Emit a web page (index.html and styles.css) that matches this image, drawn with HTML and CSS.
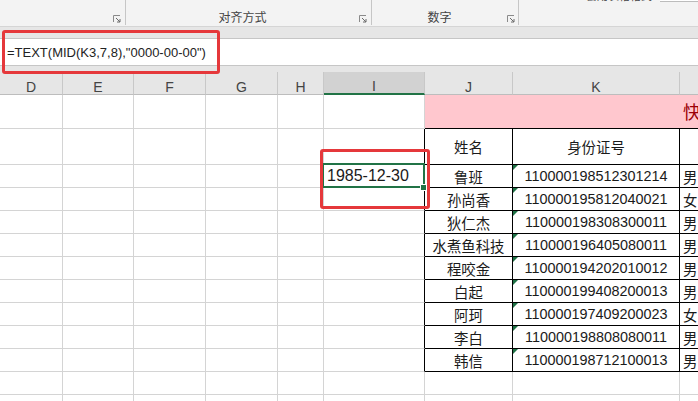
FILE: index.html
```html
<!DOCTYPE html>
<html lang="zh-CN">
<head>
  <meta charset="UTF-8">
  <title>身份证号提取出生日期</title>
  <link rel="stylesheet" href="styles.css">
</head>
<body>

  <div class="ribbon">
    <div class="group g1">
      <span class="glabel"></span>
      <svg class="launch" width="8" height="8" viewBox="0 0 8 8"><path d="M0.5 7V0.5H7" fill="none" stroke="#8a8a8a"/><path d="M3 3L7 7M7 4V7H4" fill="none" stroke="#6a6a6a"/></svg>
    </div>
    <div class="group g2">
      <span class="glabel">对齐方式</span>
      <svg class="launch" width="8" height="8" viewBox="0 0 8 8"><path d="M0.5 7V0.5H7" fill="none" stroke="#8a8a8a"/><path d="M3 3L7 7M7 4V7H4" fill="none" stroke="#6a6a6a"/></svg>
    </div>
    <div class="group g3">
      <span class="glabel">数字</span>
      <svg class="launch" width="8" height="8" viewBox="0 0 8 8"><path d="M0.5 7V0.5H7" fill="none" stroke="#8a8a8a"/><path d="M3 3L7 7M7 4V7H4" fill="none" stroke="#6a6a6a"/></svg>
    </div>
    <div class="group g4">
      <span class="cut">套用表格格式</span>
      <span class="cutbox"></span>
    </div>
  </div>

  <div class="band"></div>

  <div class="fbar">=TEXT(MID(K3,7,8),"0000-00-00")</div>

  <div class="gap"></div>

  <div class="sheet-wrap">
    <div class="sheet">
      <!-- column headers -->
      <div class="ch">D</div><div class="ch">E</div><div class="ch">F</div><div class="ch">G</div><div class="ch">H</div>
      <div class="ch on">I</div><div class="ch">J</div><div class="ch">K</div><div class="ch">L</div>

      <!-- row 1 -->
      <div class="c"></div><div class="c"></div><div class="c"></div><div class="c"></div><div class="c"></div><div class="c"></div>
      <div class="c title">快速提取出生日期</div>

      <!-- row 2 -->
      <div class="c"></div><div class="c"></div><div class="c"></div><div class="c"></div><div class="c"></div><div class="c edge"></div>
      <div class="c t mid">姓名</div><div class="c t mid">身份证号</div><div class="c t"></div>

      <!-- rows 3-11 -->
      <div class="c"></div><div class="c"></div><div class="c"></div><div class="c"></div><div class="c"></div>
      <div class="c edge cur">1985-12-30<span class="sel-box"></span><span class="handle"></span></div>
      <div class="c t mid">鲁班</div><div class="c t mid id"><span class="flag"></span>110000198512301214</div><div class="c t sex">男</div>

      <div class="c"></div><div class="c"></div><div class="c"></div><div class="c"></div><div class="c"></div><div class="c edge"></div>
      <div class="c t mid">孙尚香</div><div class="c t mid id"><span class="flag"></span>110000195812040021</div><div class="c t sex">女</div>

      <div class="c"></div><div class="c"></div><div class="c"></div><div class="c"></div><div class="c"></div><div class="c edge"></div>
      <div class="c t mid">狄仁杰</div><div class="c t mid id"><span class="flag"></span>110000198308300011</div><div class="c t sex">男</div>

      <div class="c"></div><div class="c"></div><div class="c"></div><div class="c"></div><div class="c"></div><div class="c edge"></div>
      <div class="c t mid">水煮鱼科技</div><div class="c t mid id"><span class="flag"></span>110000196405080011</div><div class="c t sex">男</div>

      <div class="c"></div><div class="c"></div><div class="c"></div><div class="c"></div><div class="c"></div><div class="c edge"></div>
      <div class="c t mid">程咬金</div><div class="c t mid id"><span class="flag"></span>110000194202010012</div><div class="c t sex">男</div>

      <div class="c"></div><div class="c"></div><div class="c"></div><div class="c"></div><div class="c"></div><div class="c edge"></div>
      <div class="c t mid">白起</div><div class="c t mid id"><span class="flag"></span>110000199408200013</div><div class="c t sex">男</div>

      <div class="c"></div><div class="c"></div><div class="c"></div><div class="c"></div><div class="c"></div><div class="c edge"></div>
      <div class="c t mid">阿珂</div><div class="c t mid id"><span class="flag"></span>110000197409200023</div><div class="c t sex">女</div>

      <div class="c"></div><div class="c"></div><div class="c"></div><div class="c"></div><div class="c"></div><div class="c edge"></div>
      <div class="c t mid">李白</div><div class="c t mid id"><span class="flag"></span>110000198808080011</div><div class="c t sex">男</div>

      <div class="c"></div><div class="c"></div><div class="c"></div><div class="c"></div><div class="c"></div><div class="c edge"></div>
      <div class="c t mid">韩信</div><div class="c t mid id"><span class="flag"></span>110000198712100013</div><div class="c t sex">男</div>

      <!-- empty rows -->
      <div class="c"></div><div class="c"></div><div class="c"></div><div class="c"></div><div class="c"></div><div class="c"></div><div class="c"></div><div class="c"></div><div class="c"></div>
      <div class="c"></div><div class="c"></div><div class="c"></div><div class="c"></div><div class="c"></div><div class="c"></div><div class="c"></div><div class="c"></div><div class="c"></div>
    </div>
  </div>

  <!-- annotation boxes -->
  <div class="mark mark-formula"></div>
  <div class="mark mark-cell"></div>

</body>
</html>
```

FILE: styles.css
```css
body {
  margin: 0;
  width: 698px;
  height: 401px;
  overflow: hidden;
  position: relative;
  background: #e6e6e6;
  font-family: "Liberation Sans", "Noto Sans CJK SC", sans-serif;
  color: #1a1a1a;
}

/* ribbon */
.ribbon {
  display: flex;
  align-items: flex-start;
  height: 26px;
  background: #f3f3f3;
  border-bottom: 1px solid #d5d5d5;
}

.group {
  display: flex;
  align-items: flex-end;
  box-sizing: border-box;
  height: 25px;
  padding-bottom: 2px;
  border-right: 1px solid #c6c6c6;
}

.g1 { width: 126px; }
.g2 { width: 246px; }
.g3 { width: 147px; }

.g4 {
  flex: 1;
  border-right: none;
  align-items: flex-start;
  padding-bottom: 0;
  overflow: hidden;
}

.glabel {
  flex: 1;
  text-align: center;
  font-family: "Noto Sans CJK SC", sans-serif;
  font-size: 12px;
  line-height: 12px;
  color: #444;
}

.launch {
  margin-right: 4px;
  margin-bottom: 0;
}

.g3 .launch {
  margin-right: 3px;
}

.cut {
  margin-top: -11px;
  margin-left: 67px;
  white-space: nowrap;
  font-family: "Noto Sans CJK SC", sans-serif;
  font-size: 11px;
  line-height: 12px;
  color: #444;
}

.cutbox {
  flex: none;
  width: 60px;
  height: 1px;
  margin-left: 8px;
  border-bottom: 1px solid #bcbcbc;
  background: #fff;
}

.band {
  height: 11px;
  background: #e6e6e6;
}

/* formula bar */
.fbar {
  display: flex;
  align-items: center;
  height: 26px;
  padding-left: 7px;
  background: #fff;
  border-top: 1px solid #c6c6c6;
  border-bottom: 1px solid #c6c6c6;
  font-size: 13px;
  color: #222;
}

.gap {
  height: 6px;
}

/* sheet */
.sheet-wrap {
  width: 698px;
  overflow: hidden;
}

.sheet {
  display: grid;
  grid-template-columns: 63px 71px 72px 72px 46px 101px 88px 167px 100px;
  grid-template-rows: 23px 34px 36px repeat(11, 23px);
  width: 780px;
  background: #fff;
}

.ch {
  display: flex;
  align-items: flex-end;
  justify-content: center;
  box-sizing: border-box;
  background: #e6e6e6;
  border-right: 1px solid #c8c8c8;
  border-bottom: 1px solid #bdbdbd;
  font-size: 14px;
  line-height: 14px;
  color: #444;
}

.ch.on {
  background: #d2d2d2;
  border-bottom: 2px solid #217346;
  line-height: 13px;
}

.c {
  display: flex;
  align-items: center;
  box-sizing: border-box;
  border-right: 1px solid #d4d4d4;
  border-bottom: 1px solid #d4d4d4;
  font-size: 14.4px;
  white-space: nowrap;
  position: relative;
}

.mid {
  justify-content: center;
}

.t {
  border-right-color: #000;
  border-bottom-color: #000;
}

.edge {
  border-right-color: #000;
}

.title {
  grid-column: span 3;
  align-items: flex-end;
  padding: 0 0 4px 258px;
  overflow: hidden;
  background: #ffc7ce;
  border-right: none;
  border-bottom-color: #000;
  color: #9c0006;
  font-size: 18px;
}

.sex {
  padding-left: 3px;
}

.flag {
  position: absolute;
  left: 0;
  top: 0;
  width: 0;
  height: 0;
  border-top: 5px solid #1e7145;
  border-right: 5px solid transparent;
}

/* active cell */
.cur {
  padding-left: 3px;
  font-size: 16px;
}

.sel-box {
  position: absolute;
  left: -2px;
  top: -2px;
  right: -1px;
  bottom: -1px;
  border: 2px solid #217346;
  z-index: 2;
}

.handle {
  position: absolute;
  right: -3px;
  bottom: -4px;
  width: 5px;
  height: 5px;
  background: #217346;
  border: 1px solid #fff;
  z-index: 3;
}

/* red annotation boxes */
.mark {
  position: absolute;
  box-sizing: border-box;
  border: 3px solid #e5383b;
  border-radius: 3px;
  z-index: 5;
}

.mark-formula {
  left: 2px;
  top: 30px;
  width: 218px;
  height: 44px;
}

.mark-cell {
  left: 320px;
  top: 149px;
  width: 110px;
  height: 60px;
}
```
